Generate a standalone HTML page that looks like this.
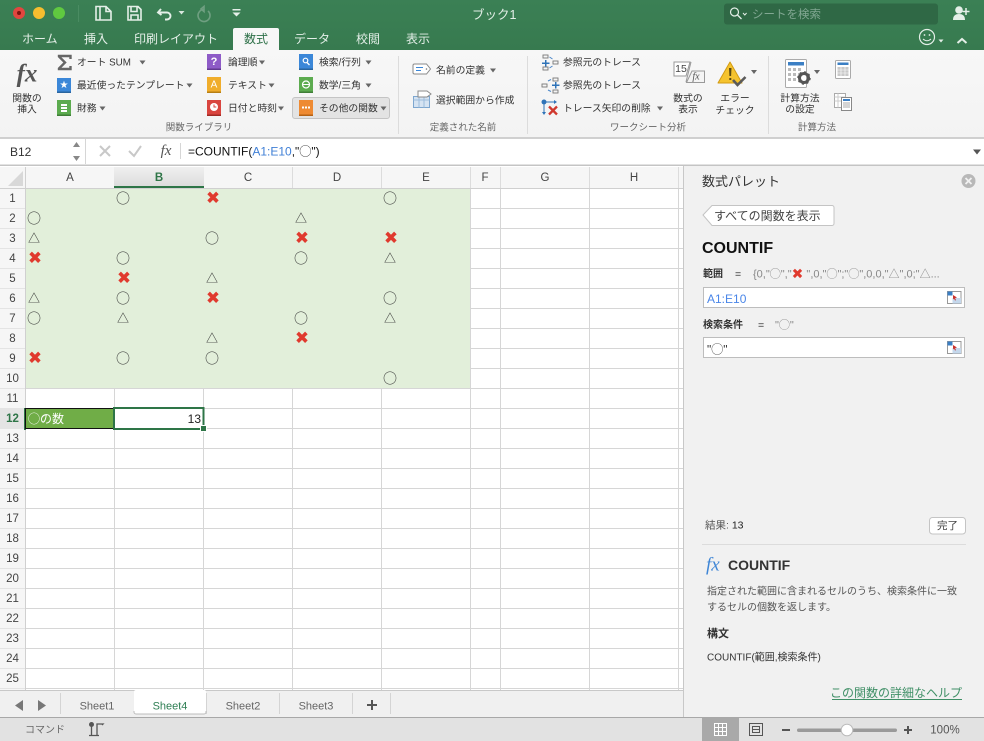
<!DOCTYPE html>
<html lang="ja"><head><meta charset="utf-8"><title>ブック1</title>
<style>
html,body{margin:0;padding:0;background:#fff}
svg{display:block;font-family:"Liberation Sans","Noto Sans CJK JP",sans-serif}
text{dominant-baseline:central;transform:translateY(.8px)}
.tab{fill:#e4efe8;font-size:12px}
.r{fill:#333;font-size:9.800px}
.g{fill:#666;font-size:9.500px;text-anchor:middle}
.m{text-anchor:middle}
.ch{fill:#444;font-size:11.500px;text-anchor:middle}
.rh{fill:#444;font-size:11.500px;text-anchor:middle}
.o{font-size:14px;fill:#333;text-anchor:middle;font-family:"Noto Sans CJK JP",sans-serif}
.t{font-size:12px;fill:#333;text-anchor:middle}
.x{font-size:17px;fill:#e03a2e;text-anchor:middle;font-family:"DejaVu Sans",sans-serif}
.gl{stroke:#d6d6d6;stroke-width:1}
</style></head><body>
<svg width="984" height="741" viewBox="0 0 984 741" xmlns="http://www.w3.org/2000/svg">
<defs>
<linearGradient id="tb" x1="0" y1="0" x2="0" y2="1"><stop offset="0" stop-color="#3b8055"/><stop offset="1" stop-color="#377a4f"/></linearGradient>
<linearGradient id="rib" x1="0" y1="0" x2="0" y2="1"><stop offset="0" stop-color="#f7f7f7"/><stop offset="1" stop-color="#f3f3f3"/></linearGradient>
<linearGradient id="hd" x1="0" y1="0" x2="0" y2="1"><stop offset="0" stop-color="#f0f0f0"/><stop offset="1" stop-color="#dcdcdc"/></linearGradient>
</defs>
<!-- title bar -->
<rect width="984" height="50" fill="url(#tb)"/>
<circle cx="19" cy="13" r="6" fill="#e2463f"/><circle cx="19" cy="13" r="2" fill="#7d1510"/>
<circle cx="39" cy="13" r="6" fill="#f6bd2f"/><circle cx="59" cy="13" r="6" fill="#60c940"/>
<line x1="78.500" y1="5" x2="78.500" y2="22" stroke="#4a8c62"/>
<g fill="none" stroke="#e4efe8" stroke-width="1.600">
<path d="M96 6.500h10l5 5v8.500H96zM100 6.500V20M106 6.500v5h5"/>
<path d="M128 6.500h10l3 3V20h-13zM131 6.500v5h6v-5M131 20v-5h7v5"/>
<path d="M161 9l-3 3.500 3.500 2.500M158 12.500h9a3.500 3.500 0 0 1 3.500 3.500 3.500 3.500 0 0 1-3.500 3.500h-2" stroke-width="1.900"/>
</g>
<path d="M178.500 11h6l-3 3.500z" fill="#d9e7de"/>
<path d="M204 9.500a6 6 0 1 0 4 1.500M204 6.500v5l-3-2.500z" fill="none" stroke="#6f9f81" stroke-width="1.600"/>
<path d="M232.500 9h8v1.500h-8zM232.500 12.500h8l-4 4z" fill="#e4efe8"/>
<text x="472" y="14" font-size="12.500" fill="#e4efe8">ブック1</text>
<rect x="724" y="3.500" width="214" height="21" rx="3" fill="#2f6845"/>
<circle cx="734.500" cy="12" r="4" fill="none" stroke="#e4efe8" stroke-width="1.200"/><path d="M737.500 15l4 4" stroke="#e4efe8" stroke-width="1.300"/>
<path d="M743 13l1.800 2 1.800-2" fill="none" stroke="#e4efe8"/>
<text x="752" y="14" font-size="11.500" fill="#82a893">シートを検索</text>
<circle cx="959" cy="10" r="3.800" fill="#e4efe8"/><path d="M953 20c0-4.500 2.500-6 6-6s6 1.500 6 6z" fill="#e4efe8"/><path d="M966 8v7M962.500 11.500h7" stroke="#e4efe8" stroke-width="1.500"/>
<text x="22" y="38" class="tab">ホーム</text>
<text x="84" y="38" class="tab">挿入</text>
<text x="134" y="38" class="tab">印刷レイアウト</text>
<path d="M233 50V30a2 2 0 0 1 2-2h42a2 2 0 0 1 2 2v20z" fill="#f7f7f7"/>
<text x="256" y="38" class="m" font-size="12" fill="#2f7149">数式</text>
<text x="294" y="38" class="tab">データ</text>
<text x="356" y="38" class="tab">校閲</text>
<text x="406" y="38" class="tab">表示</text>
<circle cx="927" cy="37" r="7.500" fill="none" stroke="#e4efe8" stroke-width="1.200"/>
<circle cx="924.500" cy="35" r=".9" fill="#e4efe8"/><circle cx="929.500" cy="35" r=".9" fill="#e4efe8"/>
<path d="M923 39q4 3.500 8 0" fill="none" stroke="#e4efe8"/>
<path d="M938.500 39.500h5l-2.500 3z" fill="#e4efe8"/>
<path d="M957.500 43l4.500-4 4.500 4" fill="none" stroke="#e4efe8" stroke-width="2"/>
<!-- ribbon -->
<rect y="50" width="984" height="88" fill="url(#rib)"/>
<line x1="0" y1="137.500" x2="984" y2="137.500" stroke="#cfcfcf"/>
<text x="27" y="73" class="m" font-style="italic" font-weight="bold" font-size="25" fill="#555" style="font-family:'Liberation Serif',serif">fx</text>
<text x="27" y="98" class="r m">関数の</text><text x="27" y="109" class="r m">挿入</text>
<path d="M70.500 59v-3H59v.5l6 6-6 6v.5h11.500v-3" fill="none" stroke="#666" stroke-width="2.400"/>
<text x="77" y="62" class="r">オート SUM</text><path d="M139.500 60.500h6l-3 4z" fill="#666"/>
<rect x="57" y="78" width="14" height="15" fill="#3b87d8"/><rect x="57" y="91.500" width="14" height="1.500" fill="#2a659f"/>
<text x="64" y="84.500" class="m" font-size="10" fill="#fff" style="font-family:'DejaVu Sans',sans-serif">★</text>
<text x="77" y="85" class="r">最近使ったテンプレート</text><path d="M186.500 83.500h6l-3 4z" fill="#666"/>
<rect x="57" y="100" width="14" height="16" fill="#5cab4f"/><rect x="57" y="114.500" width="14" height="1.500" fill="#3f7e37"/>
<path d="M61 104h6v2h-6zM61 107h6v2h-6zM61 110h6v2h-6z" fill="#fff"/>
<text x="77" y="108" class="r">財務</text><path d="M99.500 106.500h6l-3 4z" fill="#666"/>
<text x="199" y="127" class="g">関数ライブラリ</text>
<rect x="207" y="54" width="14" height="16" fill="#8e5bc7"/><rect x="207" y="68.500" width="14" height="1.500" fill="#61398f"/>
<text x="214" y="61" class="m" font-size="11" font-weight="bold" fill="#fff">?</text>
<text x="228" y="62" class="r">論理順</text><path d="M259 60.500h6l-3 4z" fill="#666"/>
<rect x="207" y="77" width="14" height="16" fill="#f0ad2c"/><rect x="207" y="91.500" width="14" height="1.500" fill="#b77f14"/>
<text x="214" y="84" class="m" font-size="10" fill="#fff">A</text>
<text x="228" y="85" class="r">テキスト</text><path d="M268.500 83.500h6l-3 4z" fill="#666"/>
<rect x="207" y="100" width="14" height="16" fill="#d9453f"/><rect x="207" y="114.500" width="14" height="1.500" fill="#a12a25"/>
<circle cx="214" cy="107" r="4" fill="#fff"/><path d="M214 104.500V107h2.300" fill="none" stroke="#d9453f"/>
<text x="228" y="108" class="r">日付と時刻</text><path d="M278 106.500h6l-3 4z" fill="#666"/>
<rect x="299" y="54" width="14" height="16" fill="#3b87d8"/><rect x="299" y="68.500" width="14" height="1.500" fill="#2a659f"/>
<circle cx="305.500" cy="60.500" r="2.300" fill="none" stroke="#fff" stroke-width="1.200"/><path d="M307 62.500l2.500 2.500" stroke="#fff" stroke-width="1.300"/>
<text x="319" y="62" class="r">検索/行列</text><path d="M365.500 60.500h6l-3 4z" fill="#666"/>
<rect x="299" y="77" width="14" height="16" fill="#5cab4f"/><rect x="299" y="91.500" width="14" height="1.500" fill="#3f7e37"/>
<circle cx="306" cy="84.500" r="3.500" fill="none" stroke="#fff" stroke-width="1.200"/><path d="M303 84.500h6" stroke="#fff"/>
<text x="319" y="85" class="r">数学/三角</text><path d="M365.500 83.500h6l-3 4z" fill="#666"/>
<rect x="292.500" y="97.500" width="97" height="21" rx="2.500" fill="#e3e3e3" stroke="#c4c4c4"/>
<rect x="299" y="100" width="14" height="16" fill="#ee8a32"/><rect x="299" y="114.500" width="14" height="1.500" fill="#b46216"/>
<path d="M302 106.500h2v2h-2zM305 106.500h2v2h-2zM308 106.500h2v2h-2z" fill="#fff"/>
<text x="319" y="108" class="r">その他の関数</text><path d="M380.500 106.500h6l-3 4z" fill="#666"/>
<line x1="398.500" y1="56" x2="398.500" y2="134" stroke="#dcdcdc"/>
<path d="M413 65.500a1.500 1.500 0 0 1 1.500-1.500h12l4 5-4 5h-12a1.500 1.500 0 0 1-1.500-1.500z" fill="#fff" stroke="#8a8a8a"/>
<path d="M416 67.500h7M416 70.500h5" stroke="#3b87d8"/><circle cx="426.500" cy="69" r=".8" fill="#777"/>
<text x="436" y="70" class="r">名前の定義</text><path d="M490 68.500h6l-3 4z" fill="#666"/>
<rect x="413.500" y="96.500" width="16" height="11" fill="#d5e3f2" stroke="#7da6cf"/><path d="M413.500 100h16M419 96.500v11M424 96.500v11" stroke="#9dbcdc"/>
<path d="M418 91h9l4 3-4 3h-9z" fill="#fff" stroke="#8a8a8a"/>
<text x="436" y="100" class="r">選択範囲から作成</text>
<text x="463" y="127" class="g">定義された名前</text>
<line x1="527.500" y1="56" x2="527.500" y2="134" stroke="#dcdcdc"/>
<g fill="none" stroke="#777" stroke-width=".9">
<rect x="543" y="55" width="5" height="3"/><rect x="543" y="67" width="5" height="3"/><rect x="553" y="61" width="5" height="3"/>
<rect x="553" y="78" width="5" height="3"/><rect x="553" y="90" width="5" height="3"/><rect x="542" y="84" width="5" height="3"/>
</g>
<path d="M542 62.500h3v-2.500h1.500v2.500h3V64h-3v2.500H545V64h-3z" fill="#2f73b8"/>
<path d="M552 84.500h3V82h1.500v2.500h3V86h-3v2.500H555V86h-3z" fill="#2f73b8"/>
<path d="M549.500 57l3 2M549.500 68l3-2M548 81l3-1.500M548 90l3 1.500" stroke="#4a86c8"/>
<text x="563" y="62" class="r">参照元のトレース</text>
<text x="563" y="85" class="r">参照先のトレース</text>
<circle cx="544" cy="102" r="2.500" fill="#2f73b8"/><path d="M544 102v11M544 102h11" stroke="#2f73b8" fill="none"/><path d="M542 112h4l-2 3zM554 100v4l3-2z" fill="#2f73b8"/>
<path d="M549 106.500l8 8M557 106.500l-8 8" stroke="#d0392e" stroke-width="2.300"/>
<text x="563" y="108" class="r">トレース矢印の削除</text><path d="M657 106.500h6l-3 4z" fill="#666"/>
<text x="648" y="127" class="g">ワークシート分析</text>
<path d="M674 62h16l-4 14h-12z" fill="#fff" stroke="#999"/><path d="M692 71h12.500v11.500h-18z" fill="#f4f4f4" stroke="#999"/><path d="M691 62l-5 20" stroke="#999"/>
<text x="681" y="68" class="m" font-size="10.500" fill="#444">15</text>
<text x="696" y="76" class="m" font-size="10" font-style="italic" fill="#555" style="font-family:'Liberation Serif',serif">fx</text>
<text x="688" y="98" class="r m">数式の</text><text x="688" y="109" class="r m">表示</text>
<path d="M730 62l-12 21h24z" fill="#f5c32e" stroke="#d39b13" stroke-linejoin="round"/>
<path d="M729 68h2.500l-.4 8h-1.700zM729.300 78h2v2h-2z" fill="#5c4a12"/>
<path d="M733 80l4.500 5 8-8" fill="none" stroke="#5a5a5a" stroke-width="2.600"/>
<path d="M751 70h6l-3 4z" fill="#666"/>
<text x="735" y="98" class="r m">エラー</text><text x="735" y="110" class="r m">チェック</text>
<line x1="768.500" y1="56" x2="768.500" y2="134" stroke="#dcdcdc"/>
<rect x="785.500" y="59.500" width="21" height="28" rx="1" fill="#fff" stroke="#aaa"/><rect x="788" y="62" width="16" height="3.500" fill="#3b7fc4"/>
<path d="M788 68h3v3h-3zM793 68h3v3h-3zM798 68h3v3h-3zM788 73h3v3h-3zM793 73h3v3h-3zM798 73h3v3h-3zM788 78h3v3h-3zM793 78h3v3h-3z" fill="#bbb"/>
<circle cx="804" cy="78" r="4.500" fill="none" stroke="#555" stroke-width="3"/><circle cx="804" cy="78" r="6" fill="none" stroke="#555" stroke-width="1.500" stroke-dasharray="2 2.700"/>
<path d="M814 70h6l-3 4z" fill="#666"/>
<text x="800" y="98" class="r m">計算方法</text><text x="800" y="109" class="r m">の設定</text>
<rect x="835.500" y="60.500" width="15" height="18" rx="1" fill="#fff" stroke="#aaa"/><rect x="837.500" y="62.500" width="11" height="2.500" fill="#3b7fc4"/>
<path d="M837.500 67h11v9h-11z" fill="#c9c9c9"/><path d="M837.500 70h11M837.500 73h11M841 67v9M845 67v9" stroke="#fff" stroke-width=".6"/>
<rect x="834.500" y="93.500" width="11" height="14" fill="#fff" stroke="#aaa"/><path d="M834.500 97h11M834.500 101h11M838 93.500v14" stroke="#ccc"/>
<rect x="841.500" y="97.500" width="10" height="13" fill="#fff" stroke="#888"/><rect x="843" y="99" width="7" height="2" fill="#3b7fc4"/><path d="M843 103h7M843 105h7M843 107h7" stroke="#aaa"/>
<text x="817" y="127" class="g">計算方法</text>
<!-- formula bar -->
<rect y="138" width="984" height="27" fill="#fff"/>
<line x1="0" y1="138.500" x2="984" y2="138.500" stroke="#d0d0d0"/>
<line x1="85.500" y1="139" x2="85.500" y2="164" stroke="#d6d6d6"/>
<text x="10" y="151" font-size="12" fill="#333">B12</text>
<path d="M73 147l3.500-5 3.500 5zM73 156l3.500 5 3.500-5z" fill="#888"/>
<path d="M100 146l10 10M110 146l-10 10" stroke="#c8c8c8" stroke-width="2"/>
<path d="M129 151l5 5 7-10" fill="none" stroke="#c8c8c8" stroke-width="2"/>
<text x="166" y="150" class="m" font-size="15" font-style="italic" fill="#555" style="font-family:'Liberation Serif',serif">fx</text>
<line x1="180.500" y1="143" x2="180.500" y2="159" stroke="#d6d6d6"/>
<text x="188" y="150.500" font-size="12" fill="#111">=COUNTIF(<tspan fill="#3f7fd6">A1:E10</tspan>,"◯")</text>
<path d="M973 149.500h8l-4 5z" fill="#555"/>
<rect y="164.500" width="984" height="2" fill="#c4c4c4"/>
<!-- sheet -->
<rect y="166" width="684" height="525" fill="#fff"/>
<rect x="26" y="189" width="444" height="199.500" fill="#e2efda"/>
<g class="gl">
<path d="M470.500 188V690M500.500 188V690M589.500 188V690M678.500 188V690M26 388.500H684"/>
<path d="M114.500 388V690M203.500 388V690M292.500 388V690M381.500 388V690M25.500 188V690"/>
<path d="M470 208.500H684M470 228.500H684M470 248.500H684M470 268.500H684M470 288.500H684M470 308.500H684M470 328.500H684M470 348.500H684M470 368.500H684"/>
<path d="M26 408.500H684M26 428.500H684M26 448.500H684M26 468.500H684M26 488.500H684M26 508.500H684M26 528.500H684M26 548.500H684M26 568.500H684M26 588.500H684M26 608.500H684M26 628.500H684M26 648.500H684M26 668.500H684M26 688.500H684"/>
</g>
<!-- headers -->
<rect y="167" width="684" height="21.500" fill="#f6f6f6"/>
<rect y="188" width="25.500" height="503" fill="#f6f6f6"/>
<path d="M0 188.500H684" stroke="#d0d0d0"/><path d="M25.500 167V691" stroke="#d0d0d0"/>
<path d="M0 208.500h25M0 228.500h25M0 248.500h25M0 268.500h25M0 288.500h25M0 308.500h25M0 328.500h25M0 348.500h25M0 368.500h25M0 388.500h25M0 408.500h25M0 428.500h25M0 448.500h25M0 468.500h25M0 488.500h25M0 508.500h25M0 528.500h25M0 548.500h25M0 568.500h25M0 588.500h25M0 608.500h25M0 628.500h25M0 648.500h25M0 668.500h25M0 688.500h25" stroke="#e4e4e4"/>
<path d="M114.500 167v21M203.500 167v21M292.500 167v21M381.500 167v21M470.500 167v21M500.500 167v21M589.500 167v21M678.500 167v21" stroke="#dcdcdc"/>
<path d="M23 171v15H8z" fill="#d8d8d8"/>
<rect x="114" y="167" width="90" height="19" fill="url(#hd)"/><rect x="114" y="186" width="90" height="2" fill="#2e7547"/>
<text x="70" y="177" class="ch">A</text><text x="159" y="177" class="ch" font-weight="bold" style="fill:#2e7547">B</text><text x="248" y="177" class="ch">C</text><text x="337" y="177" class="ch">D</text><text x="426" y="177" class="ch">E</text><text x="485" y="177" class="ch">F</text><text x="545" y="177" class="ch">G</text><text x="634" y="177" class="ch">H</text>
<text x="12.500" y="198" class="rh">1</text><text x="12.500" y="218" class="rh">2</text><text x="12.500" y="238" class="rh">3</text><text x="12.500" y="258" class="rh">4</text><text x="12.500" y="278" class="rh">5</text><text x="12.500" y="298" class="rh">6</text><text x="12.500" y="318" class="rh">7</text><text x="12.500" y="338" class="rh">8</text><text x="12.500" y="358" class="rh">9</text><text x="12.500" y="378" class="rh">10</text><text x="12.500" y="398" class="rh">11</text>
<rect y="409" width="25" height="20" fill="#e4e4e4"/><rect x="24" y="408" width="2" height="22" fill="#2e7547"/>
<text x="12.500" y="418" class="rh" font-weight="bold" style="fill:#2e7547">12</text>
<text x="12.500" y="438" class="rh">13</text><text x="12.500" y="458" class="rh">14</text><text x="12.500" y="478" class="rh">15</text><text x="12.500" y="498" class="rh">16</text><text x="12.500" y="518" class="rh">17</text><text x="12.500" y="538" class="rh">18</text><text x="12.500" y="558" class="rh">19</text><text x="12.500" y="578" class="rh">20</text><text x="12.500" y="598" class="rh">21</text><text x="12.500" y="618" class="rh">22</text><text x="12.500" y="638" class="rh">23</text><text x="12.500" y="658" class="rh">24</text><text x="12.500" y="678" class="rh">25</text>
<!-- marks -->
<g>
<text x="123" y="197.500" class="o">○</text><text x="213" y="197.500" class="x">✖</text><text x="390" y="197.500" class="o">○</text>
<text x="34" y="217.500" class="o">○</text><text x="301" y="217.500" class="t">△</text>
<text x="34" y="237.500" class="t">△</text><text x="212" y="237.500" class="o">○</text><text x="302" y="237.500" class="x">✖</text><text x="391" y="237.500" class="x">✖</text>
<text x="35" y="257.500" class="x">✖</text><text x="123" y="257.500" class="o">○</text><text x="301" y="257.500" class="o">○</text><text x="390" y="257.500" class="t">△</text>
<text x="124" y="277.500" class="x">✖</text><text x="212" y="277.500" class="t">△</text>
<text x="34" y="297.500" class="t">△</text><text x="123" y="297.500" class="o">○</text><text x="213" y="297.500" class="x">✖</text><text x="390" y="297.500" class="o">○</text>
<text x="34" y="317.500" class="o">○</text><text x="123" y="317.500" class="t">△</text><text x="301" y="317.500" class="o">○</text><text x="390" y="317.500" class="t">△</text>
<text x="212" y="337.500" class="t">△</text><text x="302" y="337.500" class="x">✖</text>
<text x="35" y="357.500" class="x">✖</text><text x="123" y="357.500" class="o">○</text><text x="212" y="357.500" class="o">○</text>
<text x="390" y="377.500" class="o">○</text>
</g>
<rect x="25.500" y="408.500" width="89" height="20" fill="#70ad47" stroke="#111"/>
<text x="28" y="418" font-size="12" fill="#fff">◯の数</text>
<rect x="114" y="408" width="89.500" height="21" fill="#fff" stroke="#2e7547" stroke-width="2"/>
<text x="201" y="418" font-size="12" fill="#222" text-anchor="end">13</text>
<rect x="200.500" y="425.500" width="6" height="6" fill="#2e7547" stroke="#fff"/>
<!-- tabs bar -->
<rect y="690" width="684" height="27.500" fill="#f0f0f0"/>
<line x1="0" y1="690.500" x2="684" y2="690.500" stroke="#c8c8c8"/>
<path d="M23 700v11l-8-5.500zM38 700v11l8-5.500z" fill="#777"/>
<path d="M60.500 693v21M352.500 693v21M390.500 693v21M279.500 693v21M206.500 693v21" stroke="#d4d4d4"/>
<rect x="134" y="690" width="72" height="24" rx="2" fill="#fff"/>
<path d="M134 711v1a2 2 0 0 0 2 2h68a2 2 0 0 0 2-2v-1" fill="none" stroke="#bdbdbd"/>
<text x="97" y="705.500" class="m" font-size="11" fill="#666">Sheet1</text>
<text x="170" y="705.500" class="m" font-size="11" fill="#2f7f54">Sheet4</text>
<text x="243" y="705.500" class="m" font-size="11" fill="#666">Sheet2</text>
<text x="316" y="705.500" class="m" font-size="11" fill="#666">Sheet3</text>
<path d="M367 704h10v2h-10zM371 700h2v10h-2z" fill="#555"/>
<!-- task pane -->
<rect x="684" y="166" width="300" height="552" fill="#f1f1f1"/>
<line x1="683.500" y1="166" x2="683.500" y2="718" stroke="#c8c8c8"/>
<text x="702" y="180.500" font-size="13" fill="#333">数式パレット</text>
<circle cx="968.500" cy="181" r="7" fill="#b8b8b8"/><path d="M965.500 178l6 6M971.500 178l-6 6" stroke="#f1f1f1" stroke-width="1.800"/>
<path d="M703 215l9-9.500h120a2 2 0 0 1 2 2v16a2 2 0 0 1-2 2H712z" fill="#fff" stroke="#c4c4c4"/>
<text x="714" y="215" font-size="12" fill="#444">すべての関数を表示</text>
<text x="702" y="247.500" font-size="16" font-weight="bold" fill="#111">COUNTIF</text>
<text x="703" y="273.500" font-size="10" font-weight="bold" fill="#333">範囲</text>
<text x="735" y="273.500" font-size="10.500" fill="#333">=</text>
<text x="753" y="273.500" font-size="11" fill="#888">{0,"◯","<tspan fill="#e03a2e" style="font-family:'DejaVu Sans',sans-serif" font-size="14">✖</tspan> ",0,"◯";"◯",0,0,"△",0;"△...</text>
<rect x="703.500" y="287.500" width="261" height="20" fill="#fff" stroke="#bdbdbd"/>
<text x="707" y="298" font-size="12" fill="#4a86e8">A1:E10</text>
<text x="703" y="324.500" font-size="10" font-weight="bold" fill="#333">検索条件</text>
<text x="758" y="324.500" font-size="10.500" fill="#333">=</text>
<text x="775" y="324.500" font-size="11" fill="#888">"◯"</text>
<rect x="703.500" y="337.500" width="261" height="20" fill="#fff" stroke="#bdbdbd"/>
<text x="707" y="348.500" font-size="12" fill="#333">"◯"</text>
<g>
<rect x="947.500" y="291.500" width="13.500" height="12" fill="#fff" stroke="#999"/><rect x="947.500" y="291.500" width="5" height="4" fill="#3b7fc4"/><rect x="952.500" y="298" width="8.500" height="5.500" fill="#c5d8ec"/><path d="M953 295l4 2.500-2 .6 1 2-1 .4-1-2-1 1z" fill="#c9302c"/>
<rect x="947.500" y="341.500" width="13.500" height="12" fill="#fff" stroke="#999"/><rect x="947.500" y="341.500" width="5" height="4" fill="#3b7fc4"/><rect x="952.500" y="348" width="8.500" height="5.500" fill="#c5d8ec"/><path d="M953 345l4 2.500-2 .6 1 2-1 .4-1-2-1 1z" fill="#c9302c"/>
</g>
<text x="705" y="524.500" font-size="10.500" fill="#555">結果: <tspan fill="#222">13</tspan></text>
<rect x="929.500" y="517.500" width="36" height="16.500" rx="3" fill="#fff" stroke="#c4c4c4"/>
<text x="947.500" y="525" class="m" font-size="10.500" fill="#444">完了</text>
<line x1="702" y1="544.500" x2="966" y2="544.500" stroke="#dcdcdc"/>
<text x="706" y="564" font-size="19" font-style="italic" fill="#3f86d6" style="font-family:'Liberation Serif',serif">fx</text>
<text x="728" y="564" font-size="14" font-weight="bold" fill="#333">COUNTIF</text>
<text x="707" y="591" font-size="10" fill="#555">指定された範囲に含まれるセルのうち、検索条件に一致</text>
<text x="707" y="607" font-size="10" fill="#555">するセルの個数を返します。</text>
<text x="707" y="633" font-size="11" font-weight="bold" fill="#333">構文</text>
<text x="707" y="657" font-size="10" fill="#333">COUNTIF(範囲,検索条件)</text>
<text x="962" y="692" text-anchor="end" font-size="12" fill="#3f8f66">この関数の詳細なヘルプ</text>
<line x1="832" y1="699.500" x2="962" y2="699.500" stroke="#3f8f66"/>
<!-- status bar -->
<rect y="718" width="984" height="23" fill="#e2e2e2"/>
<line x1="0" y1="717.500" x2="984" y2="717.500" stroke="#a8a8a8"/>
<text x="25" y="729.500" font-size="10" fill="#666">コマンド</text>
<circle cx="91.500" cy="724.500" r="2.500" fill="#555"/>
<path d="M91.500 724v11M89 735.500h10M97 735V724h6l-1 1" fill="none" stroke="#555" stroke-width="1.300"/>
<rect x="702" y="718" width="37" height="23" fill="#a9a9a9"/>
<path d="M714.500 723.500h12v12h-12zM718.500 723.500v12M722.500 723.500v12M714.500 727.500h12M714.500 731.500h12" fill="none" stroke="#fff"/>
<path d="M749.500 723.500h13v12h-13z" fill="none" stroke="#555"/><path d="M752.500 726.500h7v6h-7zM753 729.500h6" fill="none" stroke="#555"/>
<rect x="782" y="729" width="8" height="2" fill="#555"/>
<rect x="797" y="728.500" width="100" height="3.500" rx="1.700" fill="#9a9a9a"/>
<circle cx="847" cy="730" r="5.800" fill="#fff" stroke="#bbb"/>
<path d="M904 729h8v2h-8zM907 726h2v8h-2z" fill="#555"/>
<text x="945" y="729.500" class="m" font-size="11.500" fill="#555">100%</text>
</svg>
</body></html>
